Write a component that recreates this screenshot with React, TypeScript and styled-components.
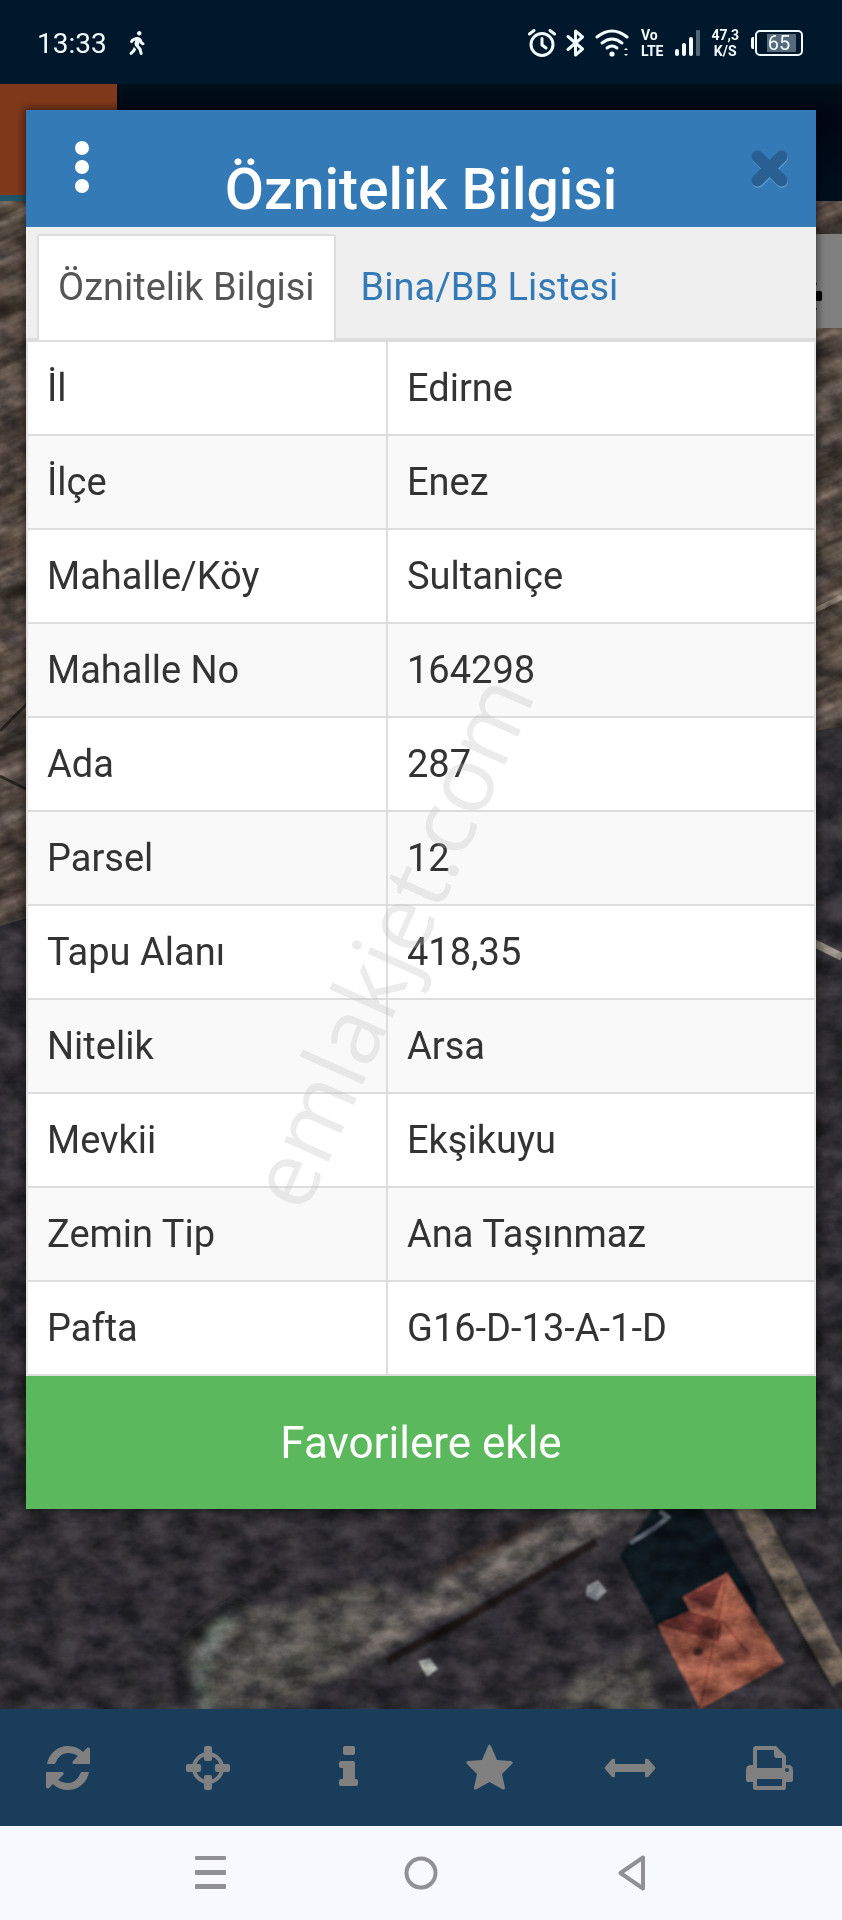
import React, { useState } from 'react'
import styled, { createGlobalStyle } from 'styled-components'
import { FaWalking } from 'react-icons/fa'

const attributes = [
  ['İl', 'Edirne'],
  ['İlçe', 'Enez'],
  ['Mahalle/Köy', 'Sultaniçe'],
  ['Mahalle No', '164298'],
  ['Ada', '287'],
  ['Parsel', '12'],
  ['Tapu Alanı', '418,35'],
  ['Nitelik', 'Arsa'],
  ['Mevkii', 'Ekşikuyu'],
  ['Zemin Tip', 'Ana Taşınmaz'],
  ['Pafta', 'G16-D-13-A-1-D'],
]

const tabs = ['Öznitelik Bilgisi', 'Bina/BB Listesi']

function StatusBar() {
  return (
    <StatusContainer>
      <StatusGroup gap={18}>
        <Clock>13:33</Clock>
        <FaWalking size={24} />
      </StatusGroup>
      <StatusGroup gap={10}>
        <svg width="28" height="28" viewBox="0 0 28 28" fill="none" stroke="currentColor" strokeWidth="3" strokeLinecap="round">
          <circle cx="14" cy="15.500" r="11" />
          <path d="M14 9.500V16L18 19M1.500 5 6 1.500M26.500 5 22 1.500" />
        </svg>
        <svg width="19" height="28" viewBox="0 0 19 28" fill="none" stroke="currentColor" strokeWidth="3" strokeLinecap="round" strokeLinejoin="round">
          <path d="M2 7.500 16.500 20 9.500 26V2L16.500 8 2 20.500" />
        </svg>
        <svg width="34" height="28" viewBox="0 0 34 28" fill="none" stroke="currentColor" strokeWidth="3" strokeLinecap="round">
          <path d="M2 8 Q17 -4 32 8" />
          <path d="M7 14 Q17 6 27 14" />
          <path d="M12 19 Q17 15 22 19" />
          <circle cx="17" cy="25" r="2.6" fill="currentColor" stroke="none" />
          <path d="M29 21l2-2 2 2zM29 25l2 2 2-2z" fill="currentColor" stroke="none" />
        </svg>
        <StackedLabel>
          <span>Vo</span>
          <span>LTE</span>
        </StackedLabel>
        <svg width="26" height="26" viewBox="0 0 26 26" fill="currentColor">
          <rect x="0" y="19" width="4" height="7" rx="2" />
          <rect x="7" y="13" width="4" height="13" rx="2" />
          <rect x="14" y="7" width="4" height="19" rx="2" />
          <rect x="21" y="0" width="4" height="26" rx="1" opacity="0.35" />
        </svg>
        <StackedLabel centered>
          <span>47,3</span>
          <span>K/S</span>
        </StackedLabel>
        <Battery>65</Battery>
      </StatusGroup>
    </StatusContainer>
  )
}

function MapView() {
  return (
    <MapCanvas viewBox="0 0 842 1508" preserveAspectRatio="xMidYMax slice" aria-hidden="true">
      <defs>
        <filter id="grain" x="0" y="0" width="100%" height="100%" colorInterpolationFilters="sRGB">
          <feTurbulence type="fractalNoise" baseFrequency="0.035 0.05" numOctaves="5" seed="8" />
          <feColorMatrix values="1.8 0 0 0 -0.42  1.7 0.1 0 0 -0.42  1.6 0 0.2 0 -0.4  0 0 0 0 1" />
        </filter>
        <filter id="furrows" x="0" y="0" width="100%" height="100%" colorInterpolationFilters="sRGB">
          <feTurbulence type="fractalNoise" baseFrequency="0.01 0.09" numOctaves="3" seed="3" />
          <feColorMatrix values="1.2 0 0 0 -0.26  1.2 0 0 0 -0.3  1.2 0 0 0 -0.33  0 0 0 0 1" />
        </filter>
        <filter id="soft">
          <feGaussianBlur stdDeviation="5" />
        </filter>
        <filter id="edge">
          <feGaussianBlur stdDeviation="1" />
        </filter>
        <clipPath id="field">
          <path d="M0 0H842V525L420 600 0 725Z" />
        </clipPath>
      </defs>
      <rect width="842" height="1508" fill="#302e32" />
      <path d="M0 0H842V525L420 600 0 725Z" fill="#52473f" />
      <g clipPath="url(#field)" opacity="0.25">
        <rect x="-400" y="-400" width="1600" height="1600" filter="url(#furrows)" transform="rotate(-25 421 400)" />
      </g>
      <path d="M810 412 842 396" stroke="#85796c" strokeWidth="5" />
      <path d="M0 530 30 500M0 575 30 590" stroke="#28241f" strokeWidth="3" />
      <path d="M810 740 842 756" stroke="#77716a" strokeWidth="8" />

      <g filter="url(#soft)">
        <path d="M180 1450 220 1415 300 1400 390 1380 410 1440 340 1475 270 1508H200Z" fill="#4f4e49" />
        <path d="M350 1448 480 1378 630 1300" fill="none" stroke="#5e5a57" strokeWidth="32" />
        <path d="M440 1375 540 1320" stroke="#33231c" strokeWidth="8" />
        <path d="M190 1440 245 1400" stroke="#171815" strokeWidth="15" />
        <path d="M205 1508Q190 1450 235 1412" fill="none" stroke="#5a625d" strokeWidth="12" />
        <path d="M560 1508 580 1470 640 1450 660 1508Z" fill="#4e4c47" />
      </g>
      <g filter="url(#edge)">
        <path d="M387 1460 470 1415 596 1341" fill="none" stroke="#1c1919" strokeWidth="8" />
        <path d="M745 1300 842 1480" stroke="#655a4f" strokeWidth="25" />
        <path d="M724 1300 842 1505" stroke="#242123" strokeWidth="4" />
        <path d="M620 1355 655 1305H702L731 1355 757 1400 755 1430 700 1500 656 1424Z" fill="#11141f" />
        <path d="M658 1424 690 1410 683 1396 727 1372 785 1462 700 1508 660 1430Z" fill="#905343" />
        <path d="M683 1396 725 1376 712 1408ZM660 1424 690 1410 722 1420 719 1441Z" fill="#602f2a" />
        <path d="M722 1420 749 1453M727 1372 716 1430 700 1508" fill="none" stroke="#74392f" strokeWidth="2" />
        <ellipse cx="698" cy="1451" rx="5" ry="4" fill="#3d2422" />
        <path d="M587 1385 598 1379 607 1390 597 1400 586 1395Z" fill="#85878a" />
        <path d="M418 1460 430 1457 438 1468 427 1476Z" fill="#858986" />
        <path d="M660 1310 668 1316 655 1327 630 1342" fill="none" stroke="#59606b" strokeWidth="4" />
      </g>

      <GrainLayer width="842" height="1508" filter="url(#grain)" />
    </MapCanvas>
  )
}

function Toolbar() {
  return (
    <ToolbarContainer aria-label="Harita araçları">
      <ToolButton aria-label="Yenile">
        <svg width="44" height="44" viewBox="0 0 44 44" fill="currentColor">
          <path d="M1 18C3 7 12 0 22 0c6 0 11 2 15 6l4-4c1-1 3 0 3 1v15H28c-2 0-2-2-1-3l5-5c-3-2-6-3-10-3-6 0-10 4-12 9-1 2-1 2-2 2Z" />
          <path d="M43 26c-2 11-11 18-21 18-6 0-11-2-15-6l-4 4c-1 1-3 0-3-1V26h16c2 0 2 2 1 3l-5 5c3 2 6 3 10 3 6 0 10-4 12-9 1-2 1-2 2-2Z" />
        </svg>
      </ToolButton>
      <ToolButton aria-label="Konum">
        <svg width="44" height="44" viewBox="0 0 44 44" fill="currentColor">
          <circle cx="22" cy="22" r="14" fill="none" stroke="currentColor" strokeWidth="4" />
          <rect x="18" y="0" width="8" height="15" rx="2" />
          <rect x="18" y="29" width="8" height="15" rx="2" />
          <rect x="0" y="18" width="15" height="8" rx="2" />
          <rect x="29" y="18" width="15" height="8" rx="2" />
        </svg>
      </ToolButton>
      <ToolButton aria-label="Bilgi">
        <svg width="20" height="44" viewBox="0 0 20 44" fill="currentColor">
          <rect x="4" y="0" width="12" height="9" rx="2" />
          <path d="M2 15H14Q16 15 16 17V33H17Q19 33 19 35V38Q19 40 17 40H2Q0 40 0 38V35Q0 33 2 33H4V22H2Q0 22 0 20V17Q0 15 2 15Z" />
        </svg>
      </ToolButton>
      <ToolButton aria-label="Favoriler">
        <svg width="47" height="48" viewBox="0 0 47 48" fill="currentColor">
          <path d="M22 2Q23.500-1 25 2L31 16 45 17Q48 18 46 20L36 30 39 44Q39 47 36 45L23.500 38 11 45Q8 47 8 44L11 30 1 20Q-1 18 2 17L16 16Z" />
        </svg>
      </ToolButton>
      <ToolButton aria-label="Ölç">
        <svg width="52" height="20" viewBox="0 0 52 20" fill="currentColor">
          <path d="M1 9 8 1Q11 0 11 2V6H41V2Q41 0 44 1L51 9Q52 10 51 11L44 19Q41 20 41 18V14H11V18Q11 20 8 19L1 11Q0 10 1 9Z" />
        </svg>
      </ToolButton>
      <ToolButton aria-label="Yazdır">
        <svg width="48" height="44" viewBox="0 0 48 44" fill="currentColor" fillRule="evenodd">
          <path d="M10 0H30L40 10V19H42Q47 19 47 24V34Q47 36 45 36H40V42Q40 44 38 44H9Q7 44 7 42V36H2Q0 36 0 34V24Q0 19 5 19H7V3Q7 0 10 0ZM11 4V22H36V12H31Q28 12 28 9V4ZM11 33V40H36V33ZM41 22A2 2 0 1 0 41 26 2 2 0 1 0 41 22Z" />
        </svg>
      </ToolButton>
    </ToolbarContainer>
  )
}

function SystemNavigation() {
  return (
    <SystemNav aria-label="Sistem">
      <SystemButton aria-label="Son uygulamalar">
        <svg width="32" height="34" viewBox="0 0 32 34" fill="currentColor">
          <rect y="0" width="31" height="4" rx="1" />
          <rect y="14" width="31" height="5" rx="1" />
          <rect y="28" width="31" height="5" rx="1" />
        </svg>
      </SystemButton>
      <SystemButton aria-label="Ana ekran">
        <svg width="34" height="34" viewBox="0 0 34 34" fill="none" stroke="currentColor" strokeWidth="4">
          <circle cx="17" cy="17" r="14.500" />
        </svg>
      </SystemButton>
      <SystemButton aria-label="Geri">
        <svg width="28" height="36" viewBox="0 0 28 36" fill="none" stroke="currentColor" strokeWidth="4" strokeLinejoin="round">
          <path d="M25 2.500V33.500L2.500 18Z" />
        </svg>
      </SystemButton>
    </SystemNav>
  )
}

function App() {
  const [activeTab, setActiveTab] = useState(0)

  return (
    <Screen>
      <GlobalStyle />
      <StatusBar />
      <Stage>
        <Backdrop>
          <AppHeader>
            <HeaderAccent />
          </AppHeader>
          <MapArea>
            <MapView />
            <MapControl>
              <svg width="32" height="34" viewBox="0 0 32 34">
                <path d="M0 12H10Q12 12 12 14V20Q12 22 10 22H0ZM4 3 7 4 6 7 3 6ZM3 28 7 29 6 32 3 32Z" />
              </svg>
            </MapControl>
          </MapArea>
        </Backdrop>
        <Dialog role="dialog" aria-labelledby="dialog-title">
          <DialogHeader>
            <HeaderButton aria-label="Menü">
              <svg width="14" height="54" viewBox="0 0 14 54" fill="#fff">
                <circle cx="7" cy="8" r="7" />
                <circle cx="7" cy="27" r="7" />
                <circle cx="7" cy="46" r="7" />
              </svg>
            </HeaderButton>
            <Title id="dialog-title">Öznitelik Bilgisi</Title>
            <HeaderButton aria-label="Kapat">
              <svg width="40" height="42" viewBox="0 0 40 42" fill="none" strokeWidth="12" strokeLinecap="round">
                <path d="M8 10 32 34M32 10 8 34" stroke="#5c97ca" />
                <path d="M7.500 8.500 31.500 32.500M31.500 8.500 7.500 32.500" stroke="#295f92" />
              </svg>
            </HeaderButton>
          </DialogHeader>
          <TabList role="tablist">
            {tabs.map((label, index) => (
              <Tab
                key={label}
                role="tab"
                active={index === activeTab}
                aria-selected={index === activeTab}
                onClick={() => setActiveTab(index)}
              >
                {label}
              </Tab>
            ))}
          </TabList>
          <AttributeTable>
            <tbody>
              {attributes.map(([name, value]) => (
                <AttributeRow key={name}>
                  <NameCell scope="row">{name}</NameCell>
                  <ValueCell>{value}</ValueCell>
                </AttributeRow>
              ))}
            </tbody>
          </AttributeTable>
          <FavoriteButton>Favorilere ekle</FavoriteButton>
          <Watermark>emlakjet.com</Watermark>
        </Dialog>
      </Stage>
      <Toolbar />
      <SystemNavigation />
    </Screen>
  )
}

export default App


const GlobalStyle = createGlobalStyle`
  * {
    box-sizing: border-box;
  }

  body {
    margin: 0;
    font-family: Roboto, 'Liberation Sans', sans-serif;
    background: #f8f8ff;
  }

  button {
    padding: 0;
    border: 0;
    background: none;
    color: inherit;
    font-family: inherit;
    cursor: pointer;
  }

  svg {
    display: block;
    flex-shrink: 0;
  }
`

const Screen = styled.div`
  display: flex;
  flex-direction: column;
  min-height: 100vh;
`

const StatusContainer = styled.header`
  display: flex;
  align-items: center;
  justify-content: space-between;
  height: 84px;
  padding: 2px 39px 0 37px;
  color: #f2fbff;
  background: #00182b;
`

const StatusGroup = styled.div<{ gap: number }>`
  display: flex;
  align-items: center;
  gap: ${p => p.gap}px;
`

const Clock = styled.time`
  font-size: 28px;
`

const StackedLabel = styled.div<{ centered?: boolean }>`
  display: flex;
  flex-direction: column;
  align-items: ${p => (p.centered ? 'center' : 'flex-start')};
  padding: ${p => (p.centered ? '0' : '0 2px')};
  font-size: 14px;
  font-weight: 700;
  line-height: 16px;
`

const Battery = styled.div`
  position: relative;
  width: 48px;
  height: 26px;
  margin-left: 6px;
  border: 2px solid #f2fbff;
  border-radius: 5px;
  background: linear-gradient(90deg, transparent 20%, #566a7b 20%, #566a7b 92%, transparent 92%) content-box;
  padding: 2px;
  font-size: 20px;
  line-height: 18px;
  text-align: center;

  &::before {
    content: '';
    position: absolute;
    left: -6px;
    top: 5px;
    width: 3px;
    height: 12px;
    border-radius: 2px 0 0 2px;
    background: #f2fbff;
  }
`

const Stage = styled.main`
  display: grid;
  flex: 1;

  > * {
    grid-area: 1 / 1;
    min-width: 0;
  }
`

const Backdrop = styled.div`
  display: flex;
  flex-direction: column;
`

const AppHeader = styled.div`
  height: 117px;
  background: linear-gradient(#000f18, #000714 30%, #000f1c);
`

const HeaderAccent = styled.div`
  width: 117px;
  height: 117px;
  border-bottom: 6px solid #1f5566;
  background: #80391b;
`

const MapArea = styled.div`
  position: relative;
  flex: 1;
  overflow: hidden;
  background: #29282d;
`

const MapCanvas = styled.svg`
  position: absolute;
  inset: 0;
  width: 100%;
  height: 100%;
`

const GrainLayer = styled.rect`
  mix-blend-mode: overlay;
  opacity: 0.4;
`

const MapControl = styled.div`
  position: absolute;
  top: 33px;
  right: 0;
  display: flex;
  align-items: center;
  width: 94px;
  height: 94px;
  padding: 30px 0 0 62px;
  background: #808080;
`

const Dialog = styled.section`
  position: relative;
  display: flex;
  flex-direction: column;
  align-self: start;
  margin: 26px 26px 200px;
  background: #fff;
  box-shadow: 0 0 8px 2px rgba(0, 0, 0, 0.5);
`

const DialogHeader = styled.div`
  display: grid;
  grid-template-columns: 60px 1fr 60px;
  align-items: start;
  height: 117px;
  padding: 30px 26px 0;
  color: #fff;
  background: #337ab7;
`

const HeaderButton = styled.button`
  display: flex;
  align-items: center;
  justify-content: center;
  width: 40px;
  height: 58px;
  justify-self: end;

  &:first-child {
    margin-right: 10px;
    height: 54px;
  }
`

const Title = styled.h1`
  margin: 16px 0 0;
  font-size: 57px;
  font-weight: 500;
  line-height: 67px;
  text-align: center;
  white-space: nowrap;
`

const TabList = styled.div`
  display: flex;
  align-items: flex-end;
  height: 115px;
  padding: 7px 11px 0;
  border-bottom: 4px solid #ddd;
  background: #efefef;
`

const Tab = styled.button<{ active: boolean }>`
  height: 106px;
  margin-bottom: -2px;
  margin-right: 4px;
  padding: 0 19px 2px;
  border: 2px solid ${p => (p.active ? '#ddd' : 'transparent')};
  border-bottom: 0;
  border-radius: 3px 3px 0 0;
  color: ${p => (p.active ? '#555' : '#337ab7')};
  background: ${p => (p.active ? '#fff' : 'transparent')};
  font-size: 38px;
  white-space: nowrap;
`

const AttributeTable = styled.table`
  width: 100%;
  table-layout: fixed;
  border-collapse: separate;
  border-spacing: 0;
  border: solid #e4e4e4;
  border-width: 0 2px;
  color: #333;
  font-size: 38px;
  line-height: 48px;
`

const AttributeRow = styled.tr`
  &:nth-child(even) {
    background: #f9f9f9;
  }

  > * {
    height: 94px;
    padding: 0 19px;
    border-bottom: 2px solid #ddd;
    font-weight: 400;
    text-align: left;
  }
`

const NameCell = styled.th`
  width: 360px;
  border-right: 2px solid #ddd;
`

const ValueCell = styled.td`
  width: auto;
`

const FavoriteButton = styled.button`
  height: 133px;
  color: #fff !important;
  background: #5cb85c !important;
  font-size: 44px;
`

const Watermark = styled.span`
  position: absolute;
  top: 59.4%;
  left: 46%;
  color: rgba(190, 190, 190, 0.3);
  font-family: 'Open Sans', sans-serif;
  font-size: 91px;
  line-height: 1;
  transform: translate(-50%, -50%) rotate(-66deg);
  pointer-events: none;
`

const ToolbarContainer = styled.nav`
  display: flex;
  justify-content: space-between;
  height: 117px;
  padding: 0 42px 0 38px;
  color: #808080;
  background: #1a3d5b;
`

const ToolButton = styled.button`
  display: flex;
  align-items: center;
  justify-content: center;
  width: 60px;
`

const SystemNav = styled.nav`
  display: grid;
  grid-template-columns: repeat(3, 1fr);
  height: 94px;
  padding: 0 12.5%;
  color: #909095;
  background: #f8f8ff;
`

const SystemButton = styled.button`
  display: flex;
  align-items: center;
  justify-content: center;
`
